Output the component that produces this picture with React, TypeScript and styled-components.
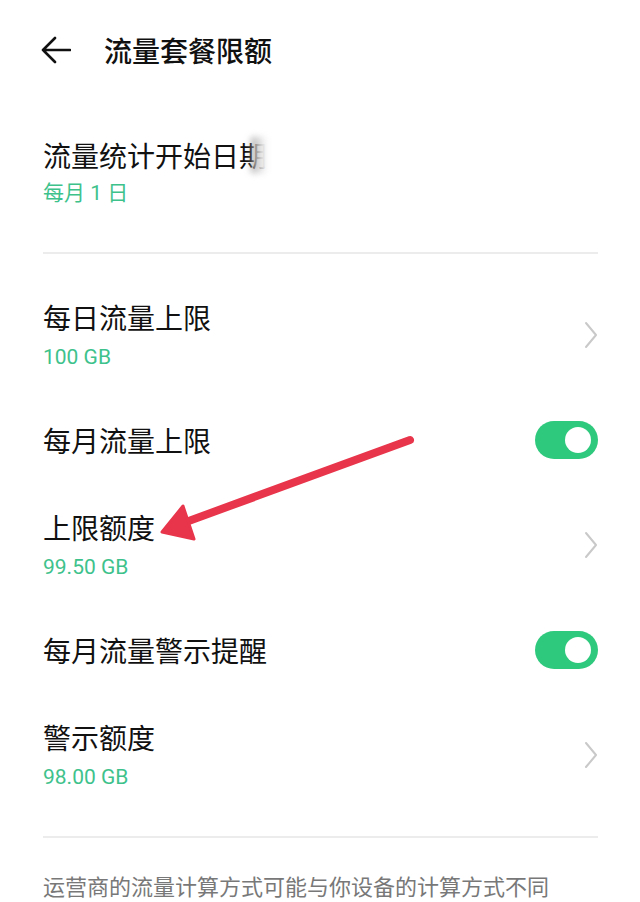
import { createGlobalStyle, styled } from "styled-components";

const GlobalStyle = createGlobalStyle`
  * {
    box-sizing: border-box;
  }
  body {
    margin: 0;
    background: #ffffff;
    font-family: Roboto, "Noto Sans CJK SC", sans-serif;
    color: #111111;
  }
`;

const Page = styled.div`
  position: relative;
  width: 640px;
  height: 902px;
  overflow: hidden;
  background: #ffffff;
`;

const Header = styled.header`
  height: 100px;
  display: flex;
  align-items: center;
  gap: 33px;
  padding-left: 41px;
`;

const BackButton = styled.span`
  display: flex;
  align-items: center;
  width: 30px;
  height: 30px;
  svg {
    width: 30px;
    height: 30px;
  }
`;

const Title = styled.h1`
  margin: 0;
  font-size: 28px;
  font-weight: 500;
  color: #111111;
  font-family: "Noto Sans CJK SC", sans-serif;
`;

const Section = styled.section<{ $top: number; $bottom: number }>`
  padding: ${(p) => p.$top}px 42px ${(p) => p.$bottom}px 43px;
`;

const Divider = styled.div`
  height: 2px;
  margin: 0 42px 0 43px;
  background: #ececec;
`;

const Row = styled.div<{ $height: number }>`
  height: ${(p) => p.$height}px;
  display: flex;
  align-items: center;
  justify-content: space-between;
`;

const TextBlock = styled.div<{ $shift?: number }>`
  display: flex;
  flex-direction: column;
  transform: translateY(${(p) => p.$shift ?? 0}px);
`;

const RowTitle = styled.div`
  font-family: "Noto Sans CJK SC", sans-serif;
  font-size: 28px;
  line-height: 38px;
  color: #111111;
`;

const SubText = styled.div<{ $lift?: number }>`
  margin-top: ${(p) => p.$lift ?? 3}px;
  font-family: Roboto, "Noto Sans CJK SC", sans-serif;
  font-size: 21px;
  line-height: 36px;
  color: #3ec28c;
`;

const Blurred = styled.span`
  position: relative;
  &::after {
    content: "";
    position: absolute;
    left: 12px;
    top: 2px;
    width: 22px;
    height: 90%;
    background: linear-gradient(
      90deg,
      rgba(120, 120, 120, 0.6) 0%,
      rgba(215, 215, 215, 0.9) 35%,
      #ffffff 75%
    );
    filter: blur(3px);
  }
`;

const Chevron = styled.span`
  display: flex;
  width: 14px;
  height: 28px;
  svg {
    width: 14px;
    height: 28px;
  }
`;

const Toggle = styled.span`
  position: relative;
  width: 63px;
  height: 38px;
  border-radius: 19px;
  background: #2ec97d;
  &::after {
    content: "";
    position: absolute;
    right: 7px;
    top: 6px;
    width: 26px;
    height: 26px;
    border-radius: 50%;
    background: #ffffff;
  }
`;

const Footer = styled.p`
  margin: 0;
  padding: 33px 42px 0 43px;
  font-family: "Noto Sans CJK SC", sans-serif;
  font-size: 22px;
  line-height: 28px;
  color: #787878;
`;

const Annotation = styled.svg`
  position: absolute;
  left: 0;
  top: 0;
  width: 640px;
  height: 902px;
  pointer-events: none;
`;

const ChevronIcon = () => (
  <Chevron>
    <svg viewBox="0 0 14 28" fill="none">
      <path
        d="M2 2 L12 14 L2 26"
        stroke="#c9c9c9"
        strokeWidth="2"
        strokeLinecap="round"
        strokeLinejoin="round"
      />
    </svg>
  </Chevron>
);

type Item = {
  title: string;
  sub?: string;
  kind: "link" | "toggle";
};

const items: Item[] = [
  { title: "每日流量上限", sub: "100 GB", kind: "link" },
  { title: "每月流量上限", kind: "toggle" },
  { title: "上限额度", sub: "99.50 GB", kind: "link" },
  { title: "每月流量警示提醒", kind: "toggle" },
  { title: "警示额度", sub: "98.00 GB", kind: "link" },
];

export default function App() {
  return (
    <Page>
      <GlobalStyle />
      <Header>
        <BackButton>
          <svg viewBox="0 0 30 30" fill="none">
            <path
              d="M29 15 H2 M14 3 L2 15 L14 27"
              stroke="#111111"
              strokeWidth="2.6"
              strokeLinecap="round"
              strokeLinejoin="round"
            />
          </svg>
        </BackButton>
        <Title>流量套餐限额</Title>
      </Header>

      <Section $top={36} $bottom={41}>
        <TextBlock>
          <RowTitle>
            流量统计开始日<Blurred>期</Blurred>
          </RowTitle>
          <SubText $lift={1}>每月 1 日</SubText>
        </TextBlock>
      </Section>

      <Divider />

      <Section $top={27} $bottom={27}>
        {items.map((item) => (
          <Row key={item.title} $height={item.sub ? 108 : 102}>
            <TextBlock $shift={item.sub ? 1 : 0}>
              <RowTitle>{item.title}</RowTitle>
              {item.sub && <SubText>{item.sub}</SubText>}
            </TextBlock>
            {item.kind === "link" ? <ChevronIcon /> : <Toggle />}
          </Row>
        ))}
      </Section>

      <Divider />

      <Footer>运营商的流量计算方式可能与你设备的计算方式不同</Footer>

      <Annotation viewBox="0 0 640 902">
        <path
          d="M410 440 L186 522"
          stroke="#e8354b"
          strokeWidth="8"
          strokeLinecap="round"
        />
        <path
          d="M162 532 L183 506 L194 539 Z"
          fill="#e8354b"
          stroke="#e8354b"
          strokeWidth="3"
          strokeLinejoin="round"
        />
      </Annotation>
    </Page>
  );
}
